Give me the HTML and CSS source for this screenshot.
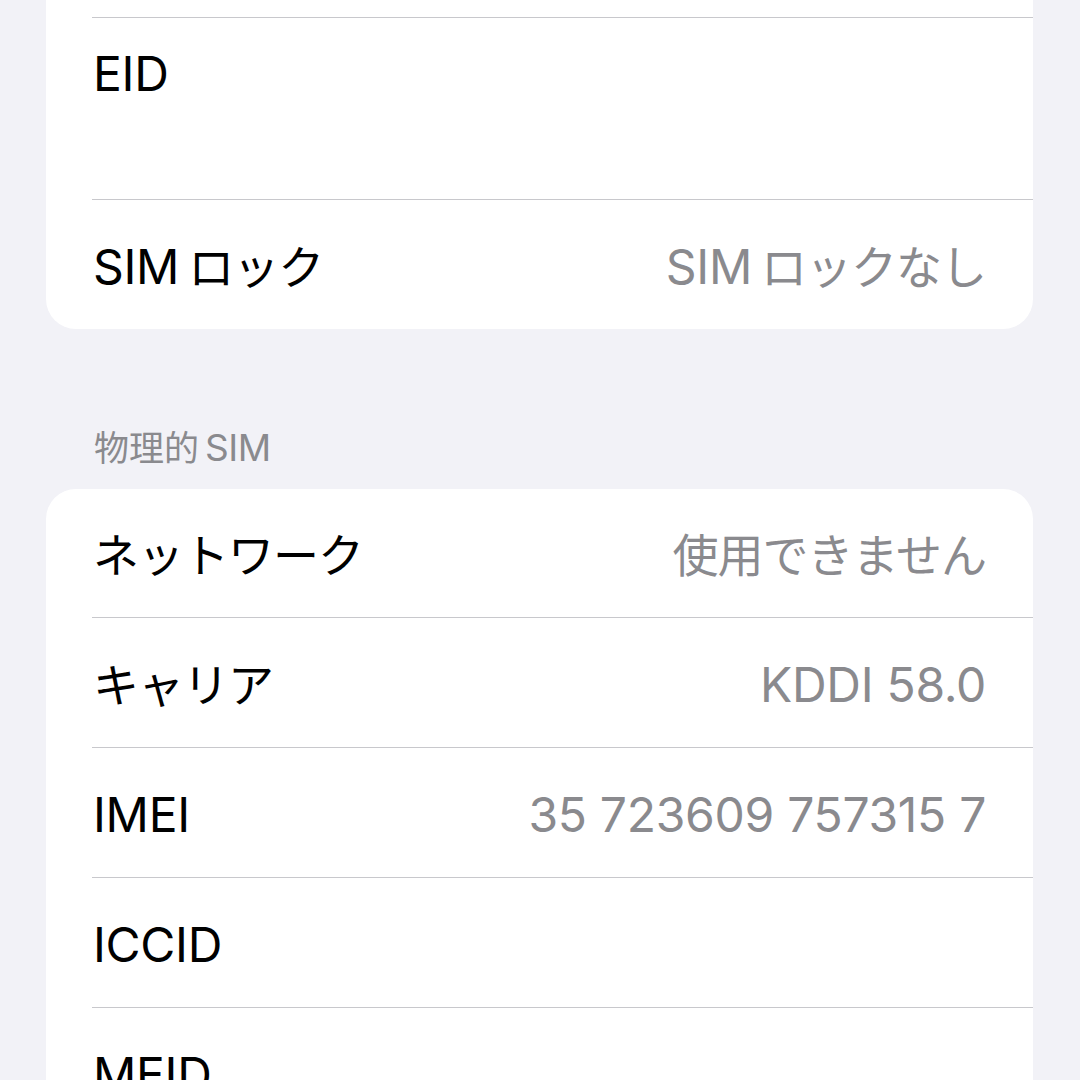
FILE: index.html
```html
<!DOCTYPE html>
<html lang="ja">
<head>
<meta charset="utf-8">
<title>情報</title>
<link rel="stylesheet" href="styles.css">
</head>
<body>
<main class="screen">
  <section class="card">
    <div class="row">
      <span class="label">&nbsp;</span>
    </div>
    <div class="row row-stack">
      <span class="label">EID</span>
      <span class="value-line">&nbsp;</span>
    </div>
    <div class="row">
      <span class="label">SIM<span class="ja gap">ロック</span></span>
      <span class="value">SIM<span class="ja gap">ロックなし</span></span>
    </div>
  </section>

  <h2 class="section-header"><span class="ja-h">物理的</span><span class="gap-h">SIM</span></h2>

  <section class="card card-bottom">
    <div class="row">
      <span class="label ja">ネットワーク</span>
      <span class="value ja">使用できません</span>
    </div>
    <div class="row">
      <span class="label ja">キャリア</span>
      <span class="value">KDDI 58.0</span>
    </div>
    <div class="row">
      <span class="label">IMEI</span>
      <span class="value">35 723609 757315 7</span>
    </div>
    <div class="row">
      <span class="label">ICCID</span>
      <span class="value"></span>
    </div>
    <div class="row">
      <span class="label">MEID</span>
      <span class="value"></span>
    </div>
  </section>
</main>
</body>
</html>
```
FILE: styles.css
```css
html, body {
  margin: 0;
  padding: 0;
  background: #f2f2f7;
}

body {
  font-family: Inter, "Noto Sans CJK JP", sans-serif;
  color: #000;
  overflow: hidden;
  height: 1080px;
}

.screen {
  margin-top: -111px;
  padding: 0 47px 0 46px;
}

.card {
  background: #fff;
  border-radius: 30px;
  overflow: hidden;
}

.row {
  display: flex;
  justify-content: space-between;
  align-items: flex-start;
  margin-left: 46px;
  padding: 38px 47px 33px 0;
  font-size: 48px;
  line-height: 58px;
  letter-spacing: -0.3px;
  border-top: 1px solid #c8c8cc;
}

.row:first-child {
  border-top: none;
  padding-top: 37px;
}

.row-stack {
  flex-direction: column;
  padding-top: 27px;
  padding-bottom: 38px;
  position: relative;
}

.row-stack::before {
  content: "";
  position: absolute;
  left: -67px;
  top: 106px;
  width: 22px;
  height: 3px;
  background: #fff;
}

.label {
  white-space: nowrap;
  padding-left: 1px;
}

.value {
  color: #8a8a8e;
  white-space: nowrap;
}

.value-line {
  color: #fff;
}

.ja {
  font-size: 46px;
  letter-spacing: -1px;
}

.gap {
  padding-left: 9px;
}

.section-header {
  margin: 97px 0 19px 0;
  padding-left: 48px;
  font-size: 37px;
  line-height: 44px;
  font-weight: 400;
  color: #8a8a8e;
}

.ja-h {
  font-size: 35px;
}

.gap-h {
  padding-left: 6px;
  letter-spacing: -0.5px;
}
```
